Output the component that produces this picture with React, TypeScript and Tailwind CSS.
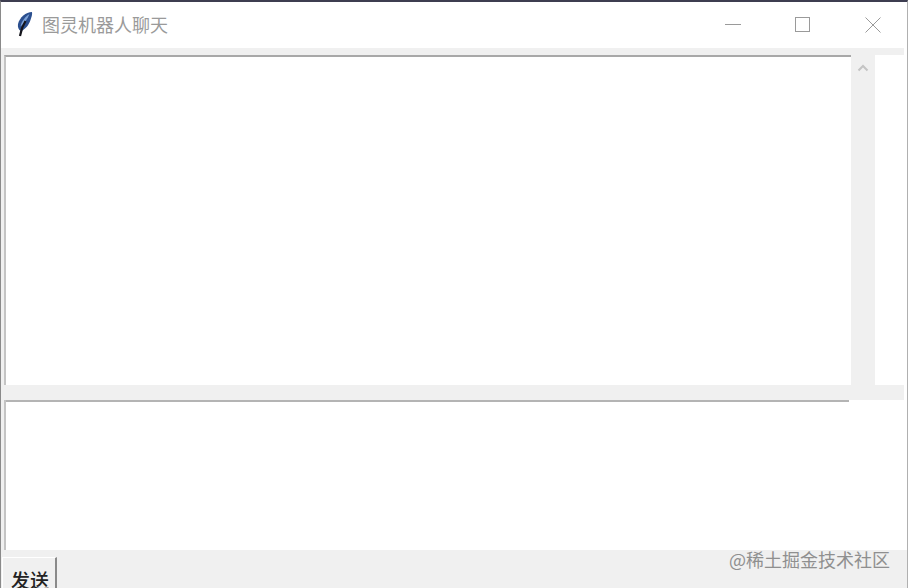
import React from 'react';

const FONT = "font-['Noto_Sans_CJK_SC','Noto_Sans',sans-serif]";

const Feather: React.FC = () => (
    <svg width="18" height="26" viewBox="0 0 18 26" className="shrink-0">
        <path d="M16 1 C10 1 3.5 6.5 2 13 C1.5 16 2.5 19 5 20 C10 18 13 13.5 14.5 9 C15.5 6 16.5 3 16 1 Z" fill="#2b4f8f" />
        <path d="M13.5 3 C9.5 5.5 5.5 10 4.5 15.5 C8 12.5 11.5 8 13.5 3 Z" fill="#7ea3d8" />
        <path d="M9.5 10 C7 14 5 19 4 25" stroke="#15151c" strokeWidth="2.2" fill="none" />
    </svg>
);

const TitleBar: React.FC = () => (
    <div className="flex items-center h-[46px] bg-white shrink-0 overflow-hidden">
        <div className="flex items-center gap-[8px] pl-[15px] flex-1 -mt-[2px]">
            <Feather />
            <span className={`text-[18px] leading-none text-[#9a9a9a] ${FONT}`}>图灵机器人聊天</span>
        </div>
        <button className="w-[70px] h-full flex items-center justify-center">
            <svg width="16" height="16" viewBox="0 0 16 16"><path d="M0 7.5H16" stroke="#9a9a9a" /></svg>
        </button>
        <button className="w-[70px] h-full flex items-center justify-center -mt-[1px]">
            <svg width="16" height="16" viewBox="0 0 16 16"><rect x="0.5" y="0.5" width="14" height="14" fill="none" stroke="#9a9a9a" /></svg>
        </button>
        <button className="w-[69px] h-full flex items-center justify-center">
            <svg width="16" height="16" viewBox="0 0 16 16"><path d="M0.5 0.5L15.5 15.5M15.5 0.5L0.5 15.5" stroke="#9a9a9a" /></svg>
        </button>
    </div>
);

const App: React.FC = () => {
    return (
        <div className="w-[908px] h-[588px] flex flex-col overflow-hidden bg-[#f0f0f0] border-t-2 border-t-[#3d3d50] border-l border-l-[#8a8a8a] border-r border-r-[#b0b0b0]">
            <TitleBar />
            <div className="flex h-[502px] shrink-0">
                <div className="w-[903px] flex flex-col shrink-0">
                    <div className="h-[7px] shrink-0" />
                    <div className="flex h-[330px] shrink-0 pl-[3px]">
                        <div className="w-[847px] bg-white border-t-2 border-l-2 border-t-[#a8a8a8] border-l-[#c4c4c4]" />
                        <div className="w-[24px] flex justify-center pt-[9px]">
                            <svg width="12" height="8" viewBox="0 0 12 8">
                                <path d="M1.5 6.5L6 2L10.5 6.5" stroke="#c4c4c4" strokeWidth="2" fill="none" />
                            </svg>
                        </div>
                        <div className="flex-1 bg-white" />
                    </div>
                    <div className="h-[15px] shrink-0" />
                    <div className="h-[150px] shrink-0 ml-[3px] bg-white border-l-2 border-[#c4c4c4]">
                        <div className="h-[2px] w-[843px] bg-[#b4b4b4]" />
                    </div>
                </div>
                <div className="flex-1 bg-white" />
            </div>
            <div className="flex-1 flex items-start justify-between pt-[7px] pl-[1px] pr-[17px]">
                <button className={`w-[55px] h-[40px] pl-[2px] bg-[#f0f0f0] border-t border-l border-white border-r-2 border-r-[#8a8a8a] text-[19px] font-medium leading-[44px] text-[#222] text-center ${FONT}`}>发送</button>
                <span className={`-mt-[8px] text-[18px] leading-[20px] text-[#8f8f8f] ${FONT}`}>@稀土掘金技术社区</span>
            </div>
        </div>
    );
};

export default App;
